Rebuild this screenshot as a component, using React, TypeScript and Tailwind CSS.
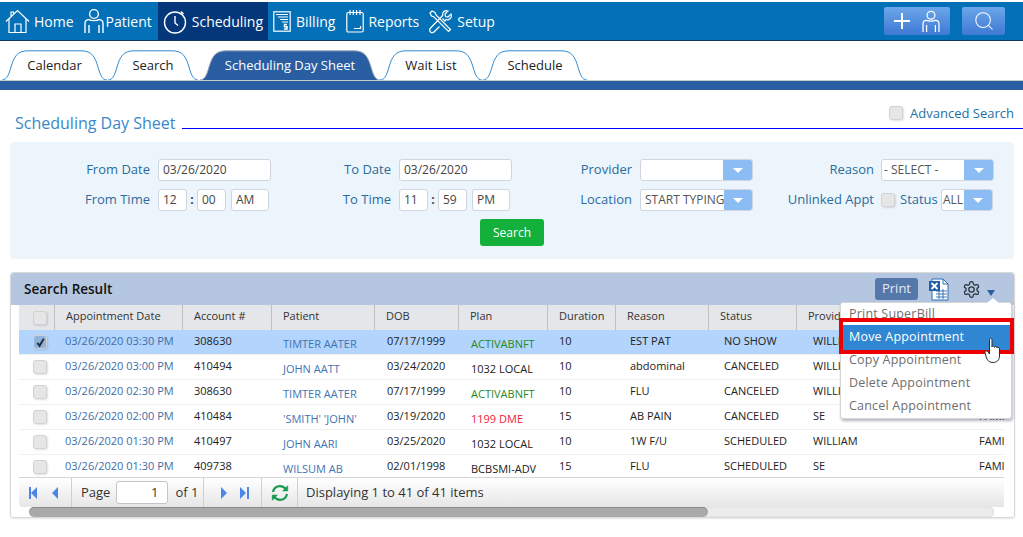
import React from "react";
import { Search } from "lucide-react";

const rows = [
  { date: "03/26/2020 03:30 PM", acct: "308630", patient: "TIMTER AATER", dob: "07/17/1999", plan: "ACTIVABNFT", planColor: "text-[#1f8a1f]", dur: "10", reason: "EST PAT", status: "NO SHOW", prov: "WILLIAM" },
  { date: "03/26/2020 03:00 PM", acct: "410494", patient: "JOHN AATT", dob: "03/24/2020", plan: "1032 LOCAL", planColor: "text-[#222]", dur: "10", reason: "abdominal", status: "CANCELED", prov: "WILLIAM" },
  { date: "03/26/2020 02:30 PM", acct: "308630", patient: "TIMTER AATER", dob: "07/17/1999", plan: "ACTIVABNFT", planColor: "text-[#1f8a1f]", dur: "10", reason: "FLU", status: "CANCELED", prov: "WILLIAM" },
  { date: "03/26/2020 02:00 PM", acct: "410484", patient: "'SMITH' 'JOHN'", dob: "03/19/2020", plan: "1199 DME", planColor: "text-[#f0203c]", dur: "15", reason: "AB PAIN", status: "CANCELED", prov: "SE" },
  { date: "03/26/2020 01:30 PM", acct: "410497", patient: "JOHN AARI", dob: "03/25/2020", plan: "1032 LOCAL", planColor: "text-[#222]", dur: "10", reason: "1W F/U", status: "SCHEDULED", prov: "WILLIAM" },
  { date: "03/26/2020 01:30 PM", acct: "409738", patient: "WILSUM AB", dob: "02/01/1998", plan: "BCBSMI-ADV", planColor: "text-[#222]", dur: "15", reason: "FLU", status: "SCHEDULED", prov: "SE" },
];

const gridCols = "grid grid-cols-[36px_128px_89px_103px_84px_89px_68px_93px_88px_182px_25px]";

function PersonIcon({ className }: { className?: string }) {
  return (
    <svg viewBox="0 0 20 26" fill="none" stroke="white" strokeWidth="1.4" className={className}>
      <circle cx="10" cy="6" r="4.4" />
      <path d="M1 25V15.5C1 12.8 3 11.6 5 11.6C6.5 13 13.5 13 15 11.6C17 11.6 19 12.8 19 15.5V25" />
      <path d="M5 17V25M15 17V25" />
    </svg>
  );
}

function HomeIcon() {
  return (
    <svg viewBox="0 0 25 25" fill="none" stroke="white" strokeWidth="1.2" className="h-[25px] w-[25px]">
      <path d="M1 12.5L12.5 1.5L24 12.5" />
      <path d="M4 10V23.5H21V10" />
      <path d="M10 23.5V15H16V23.5" />
      <path d="M6 7V3H8.5V4.8" />
    </svg>
  );
}

function ClockIcon() {
  return (
    <svg viewBox="0 0 24 25" fill="none" stroke="white" strokeWidth="1.4" className="h-[25px] w-[24px]">
      <circle cx="12" cy="13.5" r="10.5" />
      <path d="M12 7V14L15 16.5" />
      <path d="M18 2.5L20.5 5" />
    </svg>
  );
}

function BillingIcon() {
  return (
    <svg viewBox="0 0 18 21" fill="none" stroke="white" strokeWidth="1.2" className="h-[21px] w-[18px]">
      <rect x="0.8" y="0.8" width="16.4" height="19.4" />
      <path d="M3 3.5H15M5 6H15M7 8.5H15M9 11H15" />
      <path d="M14 13.5H11.5V15.7H14V18H11" strokeWidth="1.5" />
    </svg>
  );
}

function ReportsIcon() {
  return (
    <svg viewBox="0 0 18 24" fill="none" stroke="white" strokeWidth="1.2" className="h-[24px] w-[18px]">
      <rect x="0.8" y="3.5" width="16.4" height="19.5" rx="1.5" />
      <path d="M4 1V6M7.3 1V6M10.6 1V6M14 1V6" />
      <path d="M8 19.5H14.5V17" />
    </svg>
  );
}

function SetupIcon() {
  return (
    <svg viewBox="0 0 25 25" fill="none" stroke="white" strokeWidth="1.2" className="h-[25px] w-[25px]">
      <path d="M2 4L4 2L7 3.5L8 6L22.5 20.5L20.5 22.5L6 8L3.5 7Z" />
      <path d="M14.5 9.5L17 12L18 10.5C20.5 11.5 23.5 9.5 23.5 6.5L23 5L20 8L17.5 7.5L17 5L20 2C17 0.8 14 3 14.7 6.5L3 18.5C1 20.5 1.5 22 2.5 23C3.5 24 5 24 6.5 22.5L11.5 17.5" />
    </svg>
  );
}

function NavItem({ icon, label, className }: { icon: React.ReactNode; label: string; className: string }) {
  return (
    <div className={`flex h-[38px] items-center text-[14px] text-white ${className}`}>
      {icon}
      <span className="pt-[1px]">{label}</span>
    </div>
  );
}

function Tab({ label, width, active, className }: { label: string; width: number; active?: boolean; className?: string }) {
  const w = width;
  const d = `M0 30C5 30 7 24 9 17C12 7 15 0.8 26 0.8H${w - 26}C${w - 15} 0.8 ${w - 12} 7 ${w - 9} 17C${w - 7} 24 ${w - 5} 30 ${w} 30`;
  return (
    <div className={`relative flex h-[30px] items-center justify-center pt-[1px] ${className ?? ""}`} style={{ width }}>
      <svg width={w} height={30} className="absolute left-0 top-0">
        <path d={d} fill={active ? "#2a5ea3" : "white"} stroke={active ? "#9aa7b8" : "#2f8ad0"} strokeWidth="1" />
      </svg>
      <span className={`relative text-[13px] ${active ? "text-white" : "text-[#222]"}`}>{label}</span>
    </div>
  );
}

function Check({ checked }: { checked?: boolean }) {
  return (
    <div className={`flex h-[14px] w-[14px] shrink-0 items-center justify-center rounded-[3px] border border-[#d2d2d2] shadow-[1px_1px_2px_rgba(0,0,0,0.12)] ${checked ? "bg-[#8fb3dd]" : "bg-[#e6e6e6]"}`}>
      {checked && (
        <svg viewBox="0 0 12 12" className="h-[11px] w-[11px]" fill="none" stroke="#222f45" strokeWidth="2.2">
          <path d="M2.5 6.5L5 9.5L9.5 2" />
        </svg>
      )}
    </div>
  );
}

function Input({ value, className }: { value: string; className: string }) {
  return (
    <div className={`flex h-[22px] items-center rounded-[3px] border border-[#cfd6e0] bg-white pl-[4px] text-[12px] text-[#444] ${className}`}>
      {value}
    </div>
  );
}

function Combo({ value, className, btn = "w-[29px]", pad = "pl-[2px]" }: { value: string; className: string; btn?: string; pad?: string }) {
  return (
    <div className={`flex h-[22px] shrink-0 items-center overflow-hidden rounded-[3px] border border-[#cfd6e0] bg-white text-[12px] text-[#555] ${className}`}>
      <span className={`flex-1 overflow-hidden whitespace-nowrap ${pad}`}>{value}</span>
      <div className={`flex h-full items-center justify-center bg-[#8bbcf3] ${btn}`}>
        <svg viewBox="0 0 10 5" className="h-[5px] w-[10px]" fill="white">
          <path d="M0 0H10L5 5Z" />
        </svg>
      </div>
    </div>
  );
}

function Label({ children, pr = "pr-[8px]" }: { children: React.ReactNode; pr?: string }) {
  return <div className={`flex items-center justify-end text-[13px] text-[#2a6c9c] ${pr}`}>{children}</div>;
}

function PagerArrow({ dir, bar }: { dir: "left" | "right"; bar?: boolean }) {
  return (
    <svg viewBox="0 0 10 12" className="h-[12px] w-[10px]" fill="#4d86ea">
      {dir === "left" ? <path d="M8 0V12L2 6Z" /> : <path d="M1 0V12L7 6Z" />}
      {bar && (dir === "left" ? <rect x="0" y="0" width="2" height="12" /> : <rect x="8" y="0" width="2" height="12" />)}
    </svg>
  );
}

function ExcelIcon() {
  return (
    <svg viewBox="0 0 21 23" className="h-[23px] w-[21px]" fill="none">
      <path d="M4 1H15L20 6V22H4Z" fill="white" stroke="#2a6cb0" />
      <path d="M15 1V6H20" stroke="#2a6cb0" />
      <path d="M8 13H19M8 16H19M8 19H19M11 11V21M15 11V21" stroke="#2a6cb0" strokeWidth="0.9" />
      <rect x="1" y="3" width="11" height="10" fill="#1f5fa8" />
      <path d="M3.5 5L9.5 11M9.5 5L3.5 11" stroke="white" strokeWidth="1.8" />
    </svg>
  );
}

function GearIcon() {
  return (
    <svg viewBox="0 0 24 24" className="h-[19px] w-[19px]" fill="none" stroke="#2b3440" strokeWidth="1.6" strokeLinejoin="round">
      <path d="M12.2 2h-.4a2 2 0 0 0-2 2v.2a2 2 0 0 1-1 1.7l-.4.3a2 2 0 0 1-2 0l-.2-.1a2 2 0 0 0-2.7.7l-.2.4a2 2 0 0 0 .7 2.7l.2.1a2 2 0 0 1 1 1.7v.5a2 2 0 0 1-1 1.8l-.2.1a2 2 0 0 0-.7 2.7l.2.4a2 2 0 0 0 2.7.7l.2-.1a2 2 0 0 1 2 0l.4.3a2 2 0 0 1 1 1.7v.2a2 2 0 0 0 2 2h.4a2 2 0 0 0 2-2v-.2a2 2 0 0 1 1-1.7l.4-.3a2 2 0 0 1 2 0l.2.1a2 2 0 0 0 2.7-.7l.2-.4a2 2 0 0 0-.7-2.7l-.2-.1a2 2 0 0 1-1-1.8v-.5a2 2 0 0 1 1-1.7l.2-.1a2 2 0 0 0 .7-2.7l-.2-.4a2 2 0 0 0-2.7-.7l-.2.1a2 2 0 0 1-2 0l-.4-.3a2 2 0 0 1-1-1.7V4a2 2 0 0 0-2-2Z" />
      <circle cx="12" cy="12" r="3.4" />
    </svg>
  );
}

function HandCursor() {
  return (
    <svg viewBox="0 0 17 26" className="absolute left-[143px] top-[34px] h-[26px] w-[17px]" fill="white" stroke="#2c2c2c" strokeWidth="1">
      <path d="M5.5 12V3C5.5 1 8 1 8 3V10C8 8.5 10.5 8.5 10.5 10.5C10.5 9 13 9 13 11C13 9.8 15.5 10 15.5 12V19C15.5 23 13 25.5 9 25.5C5.5 25.5 3.8 24 2.5 21L1 16C0.5 14 3 13 4 15L5.5 17Z" />
    </svg>
  );
}

export default function App() {
  return (
    <div className="h-[537px] w-[1023px] overflow-hidden bg-white pt-[2px] font-['Open_Sans',sans-serif]">
      {/* top nav */}
      <div className="flex h-[39px] items-start border-b border-[#12365f] bg-[#0370b7]">
        <NavItem icon={<HomeIcon />} label="Home" className="gap-[4px] pl-[5px]" />
        <NavItem icon={<PersonIcon className="h-[26px] w-[20px]" />} label="Patient" className="ml-[10px] gap-[2px]" />
        <NavItem icon={<ClockIcon />} label="Scheduling" className="ml-[6px] gap-[5px] bg-[#03377a] pl-[5px] pr-[5px]" />
        <NavItem icon={<BillingIcon />} label="Billing" className="ml-[5px] gap-[5px]" />
        <NavItem icon={<ReportsIcon />} label="Reports" className="ml-[11px] gap-[4px]" />
        <NavItem icon={<SetupIcon />} label="Setup" className="ml-[9px] gap-[4px]" />
        <div className="ml-auto flex gap-[12px] pr-[18px] pt-[5px]">
          <div className="flex h-[28px] w-[66px] items-center justify-center gap-[12px] rounded-[2px] bg-gradient-to-b from-[#6ca6ea] to-[#3e79d4]">
            <svg viewBox="0 0 16 16" className="h-[16px] w-[16px]" stroke="white" strokeWidth="2">
              <path d="M0 8H16M8 0V16" />
            </svg>
            <PersonIcon className="h-[23px] w-[18px]" />
          </div>
          <div className="flex h-[28px] w-[43px] items-center justify-center rounded-[2px] bg-gradient-to-b from-[#6ca6ea] to-[#3e79d4]">
            <Search size={22} color="white" strokeWidth={1.1} />
          </div>
        </div>
      </div>

      {/* tabs */}
      <div className="flex h-[40px] items-end border-b border-[#c9c9c9] bg-white">
        <Tab label="Calendar" width={105} className="ml-[2px]" />
        <Tab label="Search" width={90} className="ml-[1px]" />
        <Tab label="Scheduling Day Sheet" width={180} active className="ml-[2px]" />
        <Tab label="Wait List" width={102} />
        <Tab label="Schedule" width={104} className="ml-[1px]" />
      </div>
      <div className="h-[9px] bg-[#2a5ea3]" />

      {/* title */}
      <div className="flex h-[39px] items-end">
        <div className="-mb-[5px] ml-[15px] text-[16px] leading-[22px] text-[#3a87c8]">Scheduling Day Sheet</div>
        <div className="relative ml-[6px] flex-1 border-b border-[#0000ff] pb-[5px]">
          <div className="absolute bottom-[5px] right-[9px] flex items-center gap-[7px] text-[13px] text-[#1d6fa5]">
            <Check />
            <span>Advanced Search</span>
          </div>
        </div>
      </div>

      {/* filters */}
      <div className="mx-[10px] mt-[13px] h-[117px] w-[1004px] rounded-[4px] bg-[#edf5fc] pt-[17px]">
        <div className="grid grid-cols-[148px_113px_128px_113px_128px_113px_128px_113px] grid-rows-[22px_22px] gap-y-[8px]">
          <Label>From Date</Label>
          <Input value="03/26/2020" className="w-[113px]" />
          <Label>To Date</Label>
          <Input value="03/26/2020" className="w-[113px]" />
          <Label>Provider</Label>
          <Combo value="" className="w-[113px]" />
          <Label pr="pr-[7px]">Reason</Label>
          <Combo value="- SELECT -" className="w-[113px]" />

          <Label>From Time</Label>
          <div className="flex items-center">
            <Input value="12" className="w-[29px]" />
            <span className="w-[10px] text-center text-[12px] font-bold text-[#444]">:</span>
            <Input value="00" className="w-[29px]" />
            <Input value="AM" className="ml-[5px] w-[38px]" />
          </div>
          <Label>To Time</Label>
          <div className="flex items-center">
            <Input value="11" className="w-[29px]" />
            <span className="w-[10px] text-center text-[12px] font-bold text-[#444]">:</span>
            <Input value="59" className="w-[29px]" />
            <Input value="PM" className="ml-[5px] w-[38px]" />
          </div>
          <Label>Location</Label>
          <Combo value="START TYPING" className="w-[113px]" btn="w-[28px] shrink-0" pad="pl-[4px]" />
          <Label pr="pr-[7px]">Unlinked Appt</Label>
          <div className="flex items-center">
            <Check />
            <span className="ml-[5px] w-[41px] whitespace-nowrap text-[13px] text-[#2a6c9c]">Status</span>
            <Combo value="ALL" className="w-[52px]" btn="w-[28px] shrink-0" pad="pl-[1px]" />
          </div>
        </div>
        <div className="ml-[470px] mt-[8px] flex h-[27px] w-[64px] items-center justify-center rounded-[3px] bg-[#13b13b] text-[12px] text-white">
          Search
        </div>
      </div>

      {/* results */}
      <div className="relative ml-[10px] mt-[13px] h-[246px] w-[1005px] rounded-[3px] border border-[#d9d9d9] shadow-[0_1px_2px_rgba(0,0,0,0.1)]">
        <div className="flex h-[32px] items-center rounded-t-[3px] bg-[#b4c6e0] pl-[13px]">
          <span className="pt-[1px] text-[13.5px] font-semibold text-[#111]">Search Result</span>
          <div className="ml-auto flex items-center pr-[19px]">
            <div className="flex h-[22px] w-[43px] items-center justify-center rounded-[3px] bg-[#5578ab] text-[13px] text-[#e3e9f3]">Print</div>
            <div className="ml-[10px]"><ExcelIcon /></div>
            <div className="ml-[13px]"><GearIcon /></div>
            <svg viewBox="0 0 8 6" className="ml-[6px] mt-[7px] h-[6px] w-[8px]" fill="#2a5ea3">
              <path d="M0 0H8L4 6Z" />
            </svg>
          </div>
        </div>

        <div className="ml-[8px] w-[985px] overflow-hidden">
          <div className={`${gridCols} h-[25px] bg-[#e4e6ea] text-[11px] text-[#333]`}>
            <div className="flex items-center border-r border-[#c0c0c0] pl-[14px]"><Check /></div>
            {["Appointment Date", "Account #", "Patient", "DOB", "Plan", "Duration", "Reason", "Status", "Provider", ""].map((h) => (
              <div key={h} className="flex items-center whitespace-nowrap border-r border-[#c0c0c0] pb-[2px] pl-[11px] last:border-r-0">{h}</div>
            ))}
          </div>
          <div className="h-[147px] overflow-hidden">
            {rows.map((r, i) => (
              <div key={i} className={`${gridCols} h-[25px] whitespace-nowrap border-b border-[#f1f1f1] text-[11px] leading-[15px] text-[#222] ${i === 0 ? "bg-[#b3d4fc]" : "bg-white"}`}>
                <div className="flex items-center pl-[14px]"><Check checked={i === 0} /></div>
                <div className="pl-[10px] pt-[3px] text-[#3e6ea8]">{r.date}</div>
                <div className="pl-[11px] pt-[3px]">{r.acct}</div>
                <div className="pl-[11px] pt-[6px] text-[#3e74b2]">{r.patient}</div>
                <div className="pl-[12px] pt-[3px]">{r.dob}</div>
                <div className={`pl-[12px] pt-[6px] ${r.planColor}`}>{r.plan}</div>
                <div className="pl-[11px] pt-[3px]">{r.dur}</div>
                <div className="pl-[14px] pt-[3px]">{r.reason}</div>
                <div className="pl-[15px] pt-[3px]">{r.status}</div>
                <div className="pl-[16px] pt-[3px]">{r.prov}</div>
                <div className="overflow-hidden pt-[3px]">FAMI</div>
              </div>
            ))}
          </div>

          {/* pager */}
          <div className="flex h-[30px] items-center rounded-bl-[4px] border-t border-[#d5d5d5] bg-gradient-to-b from-white to-[#e6e6e6] text-[13px] text-[#333]">
            <div className="flex h-full w-[53px] items-center gap-[11px] border-r border-[#cfcfcf] pl-[10px]">
              <PagerArrow dir="left" bar />
              <PagerArrow dir="left" />
            </div>
            <div className="flex h-full w-[132px] items-center border-r border-[#cfcfcf] pl-[9px]">
              <span>Page</span>
              <div className="ml-[6px] flex h-[23px] w-[52px] items-center justify-end rounded-[3px] border border-[#c4c4c4] bg-white pr-[9px] text-[13px]">1</div>
              <span className="ml-[7px]">of 1</span>
            </div>
            <div className="flex h-full w-[58px] items-center gap-[9px] border-r border-[#cfcfcf] pl-[16px]">
              <PagerArrow dir="right" />
              <PagerArrow dir="right" bar />
            </div>
            <div className="flex h-full w-[36px] items-center justify-center border-r border-[#cfcfcf]">
              <svg viewBox="0 0 18 18" className="h-[18px] w-[18px]" fill="none" stroke="#169c52" strokeWidth="2.2">
                <path d="M2 8C2.8 4.5 5.6 2.2 9 2.2C11.5 2.2 13.5 3.4 15 5.4" />
                <path d="M16 10C15.2 13.5 12.4 15.8 9 15.8C6.5 15.8 4.5 14.6 3 12.6" />
                <path d="M16.8 1.6V7H11.6Z" fill="#169c52" strokeWidth="0.5" />
                <path d="M1.2 16.4V11H6.4Z" fill="#169c52" strokeWidth="0.5" />
              </svg>
            </div>
            <span className="ml-[8px]">Displaying 1 to 41 of 41 items</span>
          </div>
        </div>

        {/* scrollbar */}
        <div className="ml-[18px] h-[10px] w-[965px] rounded-full bg-[#ececec] shadow-[inset_0_0_1px_rgba(0,0,0,0.3)]">
          <div className="h-full w-[679px] rounded-full border-t border-[#8a8a8a] bg-[#a9a9a9]" />
        </div>

        {/* actions menu */}
        <div className="absolute left-[829px] top-[29px] w-[172px] rounded-[3px] border border-[#d5d5d5] bg-white text-[12.5px] tracking-[0.2px] text-[#6f6f6f] shadow-[1px_2px_3px_rgba(70,70,110,0.4)]">
          <div className="absolute -top-[5px] left-[146px] h-0 w-0 border-x-[6px] border-b-[5px] border-x-transparent border-b-white" />
          <div className="flex h-[22px] items-center pl-[8px]">Print SuperBill</div>
          <div className="flex h-[25px] items-center bg-[#2f86d2] pl-[8px] font-medium text-white">Move Appointment</div>
          <div className="flex h-[21px] items-center pl-[8px]">Copy Appointment</div>
          <div className="flex h-[24px] items-center pl-[8px]">Delete Appointment</div>
          <div className="flex h-[23px] items-center pl-[8px]">Cancel Appointment</div>
          <div className="absolute -left-[2px] -right-[3px] top-[15px] h-[36px] border-[4px] border-[#ee0000]" />
          <HandCursor />
        </div>
      </div>
    </div>
  );
}
